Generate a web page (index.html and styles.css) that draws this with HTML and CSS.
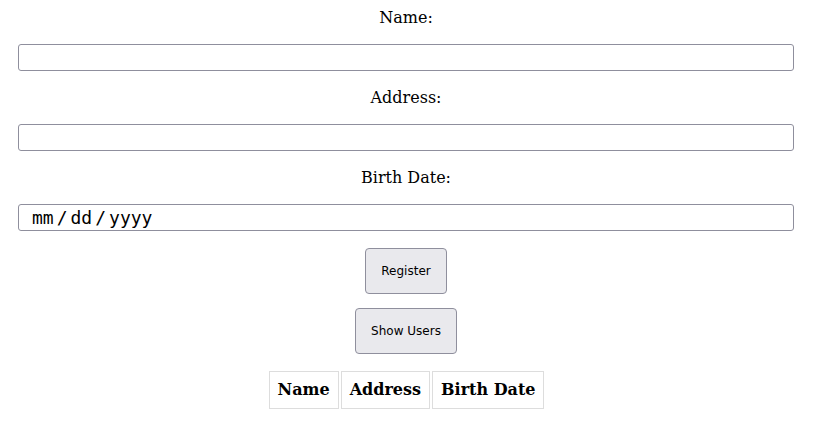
FILE: index.html
```html
<!DOCTYPE html>
<html>
<head>
<meta charset="utf-8">
<link rel="stylesheet" href="styles.css">
</head>
<body>
<form class="form">
  <label class="label" for="name">Name:</label>
  <input class="field" type="text" id="name">
  <label class="label" for="address">Address:</label>
  <input class="field" type="text" id="address">
  <label class="label" for="birth">Birth Date:</label>
  <input class="field date" type="date" id="birth">
  <button class="btn" type="button">Register</button>
  <button class="btn btn-second" type="button">Show Users</button>
</form>
<table class="users">
  <thead>
    <tr><th class="cell">Name</th><th class="cell">Address</th><th class="cell">Birth Date</th></tr>
  </thead>
</table>
</body>
</html>
```
FILE: styles.css
```css
body {
  margin: 8px;
  font-family: "DejaVu Serif", serif;
  font-size: 16px;
  text-align: center;
  color: #000;
  background: #fff;
}
.form {
  margin: 0;
  padding: 0 11px 0 10px;
}
.label {
  display: block;
  line-height: 19px;
  margin-bottom: 17px;
}
.field {
  display: block;
  box-sizing: border-box;
  width: 100%;
  height: 27px;
  margin: 0 0 17px 0;
  padding: 2px 12px;
  border: 1px solid #8f8f9d;
  border-radius: 3px;
  background: #fff;
  font-family: "DejaVu Sans", sans-serif;
  font-size: 16px;
  color: #000;
}
.date {
  font-family: "DejaVu Sans Mono", monospace;
  font-size: 18px;
  padding: 0 12px;
}
.date::-webkit-calendar-picker-indicator {
  display: none;
}
.date::-webkit-datetime-edit-text {
  padding: 0 2px;
}
.date::-webkit-datetime-edit-fields-wrapper {
  padding: 0;
}
.btn {
  display: block;
  margin: 0 auto 14px auto;
  padding: 15px;
  border: 1px solid #8f8f9d;
  border-radius: 4px;
  background: #e9e9ed;
  font-family: "DejaVu Sans", sans-serif;
  font-size: 12px;
  line-height: 14px;
  color: #000;
}
.btn-second {
  margin-bottom: 15px;
}
.users {
  margin: 0 auto;
  border-spacing: 2px;
}
.cell {
  border: 1px solid #ddd;
  padding: 8px;
  font-weight: bold;
  font-size: 16px;
  line-height: 20px;
}
```
